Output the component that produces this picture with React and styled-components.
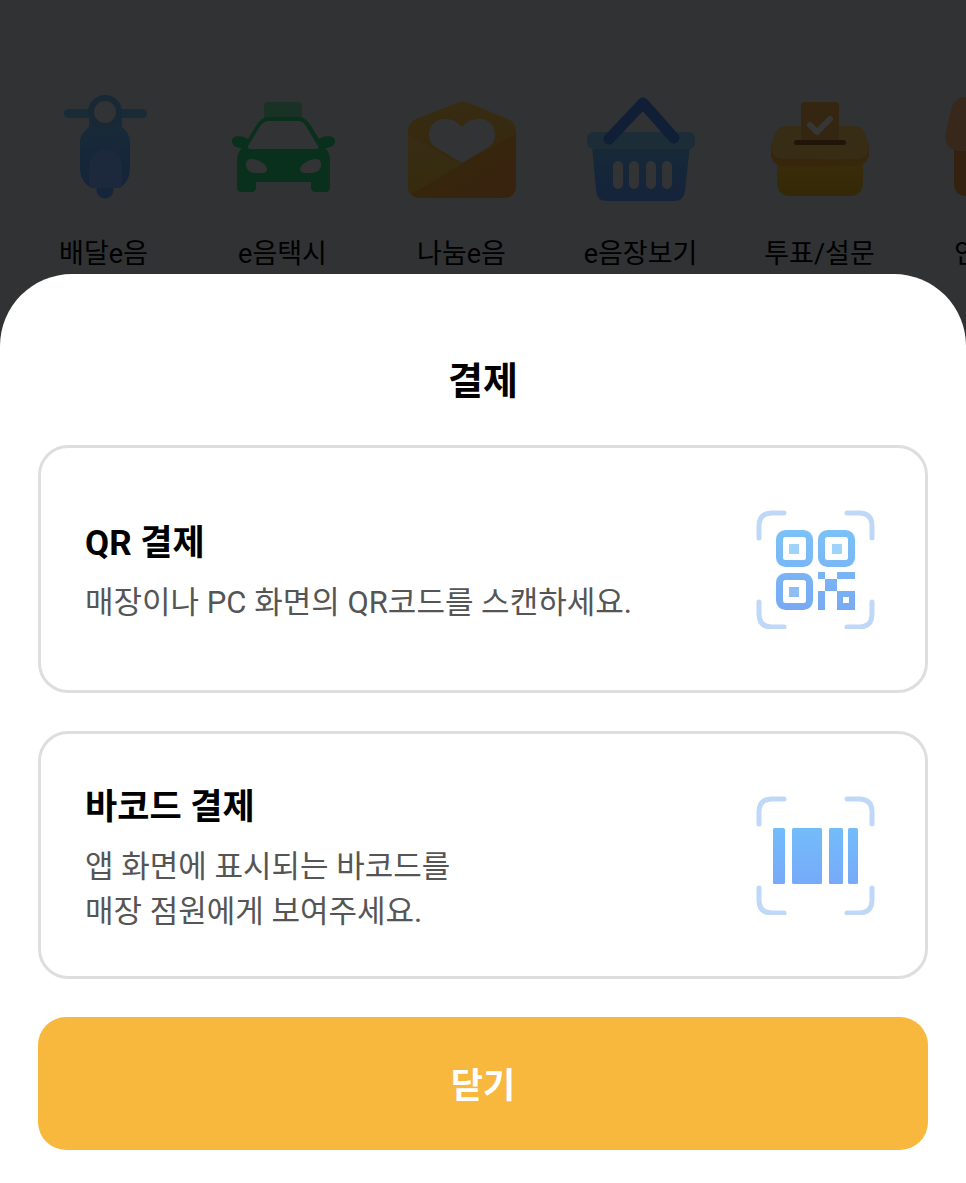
import React from "react";
import styled, { createGlobalStyle } from "styled-components";

const GlobalStyle = createGlobalStyle`
    *, *::before, *::after{
        box-sizing: border-box;
    }

    body{
        margin: 0;
        background-color: #303234;
        font-family: Roboto, "Noto Sans CJK KR", sans-serif;
        color: #000;
    }

    button{
        font-family: inherit;
        cursor: pointer;
    }
`;

const Page = styled.div`
    min-height: 100vh;
    display: flex;
    flex-direction: column;
    overflow: hidden;
`;

const Services = styled.nav`
    display: flex;
    padding: 85px 0 0 14px;
    overflow: hidden;
`;

const Service = styled.a`
    flex: 0 0 179px;
    display: flex;
    flex-direction: column;
    align-items: center;
    gap: 29px;
    font-size: 27px;
    line-height: 40px;
    white-space: nowrap;
    color: #000;
    text-decoration: none;
`;

const Icon = styled.svg`
    flex: none;
    display: block;
    width: 120px;
    height: 120px;
`;

const Sheet = styled.section`
    flex: 1;
    display: flex;
    flex-direction: column;
    gap: 38px;
    padding: 82px 38px 33px;
    background-color: #fff;
    border-radius: 72px 72px 0 0;
`;

const SheetTitle = styled.h1`
    margin: 0;
    font-size: 38px;
    line-height: 51px;
    font-weight: 700;
    text-align: center;
`;

const PayOption = styled.button`
    display: flex;
    align-items: center;
    justify-content: space-between;
    min-height: 248px;
    padding: 0 49px 0 44px;
    background-color: #fff;
    border: 3px solid #dedede;
    border-radius: 30px;
    color: #000;
    text-align: left;
`;

const OptionText = styled.span`
    display: flex;
    flex-direction: column;
    gap: 10px;
    padding-top: 5px;
`;

const OptionName = styled.strong`
    font-size: 35px;
    line-height: 52px;
    font-weight: 700;
`;

const OptionInfo = styled.span`
    font-size: 31px;
    line-height: 45px;
    color: #555;
    white-space: pre-line;
`;

const CloseButton = styled.button`
    min-height: 133px;
    padding: 6px 0 0;
    border: none;
    border-radius: 28px;
    background-color: #f8b83e;
    color: #fff;
    font-size: 35px;
    line-height: 52px;
    font-weight: 700;
`;

const Gradient = ({ id, from, to, x2 = 0 }) => (
    <linearGradient id={id} x1="0" y1="0" x2={x2} y2="1">
        <stop offset="0" stopColor={from}/>
        <stop offset="1" stopColor={to}/>
    </linearGradient>
);

const ScooterIcon = () => (
    <Icon viewBox="0 0 120 120" aria-hidden="true">
        <defs>
            <Gradient id="scooter" from="#192b38" to="#15243a"/>
        </defs>
        <rect x="20" y="24" width="83" height="9" rx="4.5" fill="#1a2b38"/>
        <circle cx="61" cy="105" r="8.5" fill="#14253c"/>
        <path d="M45 27h33v15c5 4 8 9 8 15v27c0 8-4 14-9 18H46c-6-4-10-10-10-18V57c0-6 4-11 9-15Z" fill="url(#scooter)"/>
        <circle cx="61" cy="27" r="17" fill="#182835"/>
        <circle cx="61" cy="27" r="11" fill="#323334"/>
        <path d="M45 81a16.500 16.500 0 0 1 33 0v18q0 4-4 4H49q-4 0-4-4Z" fill="#1c283c"/>
    </Icon>
);

const TaxiIcon = () => (
    <Icon viewBox="0 0 120 120" aria-hidden="true">
        <rect x="41" y="17" width="38" height="18" rx="4" fill="#1a3226"/>
        <path
            d="M47 32h27c7 0 10 3 14 9l8 13c4-3 16-5 16 2 0 5-5 7-10 7 4 4 5 8 5 14v25q0 5-5 5h-9q-5 0-5-5v-5H33v5q0 5-5 5h-9q-5 0-5-5V77c0-6 1-10 5-14-5 0-10-2-10-7 0-7 12-5 16-2l8-13c4-6 7-9 14-9Z"
            fill="#092f1d"
        />
        <path d="M46 36h29c4 0 6 2 8 5l12 20q1 3-2 3H27q-3 0-2-3l12-20c2-3 5-5 9-5Z" fill="#323334"/>
        <path d="M28 74c6 0 16 5 16 10 0 3-2 4-6 4h-6c-11 0-12-14-4-14ZM93 74c-6 0-16 5-16 10 0 3 2 4 6 4h6c11 0 12-14 4-14Z" fill="#323334"/>
    </Icon>
);

const EnvelopeIcon = () => (
    <Icon viewBox="0 0 120 120" aria-hidden="true">
        <defs>
            <Gradient id="envelope" from="#372b12" to="#35270b"/>
            <Gradient id="envelopeSide" from="#372d17" to="#362b0b"/>
            <Gradient id="envelopeFront" from="#35280b" to="#38220f" x2="1"/>
        </defs>
        <path d="M55 18q6-3 12 0l39 16q8 4 8 12v54q0 13-13 13H19q-13 0-13-13V46q0-8 8-12Z" fill="url(#envelope)"/>
        <path d="M6 50l54 30-50 29q-4-4-4-10Z" fill="url(#envelopeSide)"/>
        <path d="M114 49v51q0 13-13 13H19q-6 0-9-4l50-30Z" fill="url(#envelopeFront)"/>
        <path d="M60 42c10-13 33-11 33 8 0 5-2 9-6 12L60 78 33 62c-4-3-6-7-6-12 0-19 23-21 33-8Z" fill="#323334"/>
    </Icon>
);

const BasketIcon = () => (
    <Icon viewBox="0 0 120 120" aria-hidden="true">
        <defs>
            <Gradient id="basket" from="#172938" to="#15233b"/>
        </defs>
        <path d="M11 60h98l-5 46q-1 10-11 10H26q-10 0-11-10Z" fill="url(#basket)"/>
        <rect x="6" y="47" width="108" height="17" rx="6" fill="#1c2d38"/>
        <path d="M28 54L62 18l31 35" fill="none" stroke="#101f35" strokeWidth="11" strokeLinecap="round" strokeLinejoin="round"/>
        {[32, 48, 65, 81].map(x => (
            <rect key={x} x={x} y="76" width="10" height="28" rx="5" fill="#323334"/>
        ))}
    </Icon>
);

const BallotIcon = () => (
    <Icon viewBox="0 0 120 120" aria-hidden="true">
        <defs>
            <Gradient id="ballotBox" from="#3a2d0c" to="#332807"/>
            <Gradient id="ballotSide" from="#38230e" to="#36290a" x2="1"/>
        </defs>
        <path d="M17 70h86v27q0 14-14 14H31q-14 0-14-14Z" fill="url(#ballotBox)"/>
        <path d="M11 60h98v7q0 14-14 14H25q-14 0-14-14Z" fill="url(#ballotSide)"/>
        <path d="M26 41h68q8 0 11 8l4 12q0 13-13 13H24q-13 0-13-13l4-12q3-8 11-8Z" fill="#372c14"/>
        <rect x="34" y="55" width="52" height="5" rx="2.500" fill="#201508"/>
        <path d="M41 55V21q0-4 4-4h30q4 0 4 4v34Z" fill="#352611"/>
        <path d="M50 40l7 7 13-13" fill="none" stroke="#363636" strokeWidth="6" strokeLinecap="round" strokeLinejoin="round"/>
    </Icon>
);

const StoreIcon = () => (
    <Icon viewBox="0 0 120 120" aria-hidden="true">
        <path d="M15 55h90v43q0 13-13 13H28q-13 0-13-13Z" fill="#35210f"/>
        <path d="M27 12h66q10 0 13 13l8 25q0 16-16 16H22Q6 66 6 50l6-25q3-13 15-13Z" fill="#38281c"/>
    </Icon>
);

const ScanCorners = () => (
    <path
        d="M3 29V17Q3 4 16 4h12M91 4h12q13 0 13 13v12M116 93v12q0 13-13 13H91M28 118H16q-13 0-13-13V93"
        fill="none"
        stroke="#bfd8f7"
        strokeWidth="5"
        strokeLinecap="round"
    />
);

const QrIcon = () => (
    <Icon viewBox="0 0 120 120" aria-hidden="true">
        <defs>
            <linearGradient id="qr" gradientUnits="userSpaceOnUse" x1="0" y1="21" x2="0" y2="101">
                <stop offset="0" stopColor="#7cc1f8"/>
                <stop offset="1" stopColor="#78aaf3"/>
            </linearGradient>
        </defs>
        <ScanCorners/>
        <g fill="none" stroke="url(#qr)" strokeWidth="7">
            <rect x="23.500" y="24.500" width="30" height="30" rx="6"/>
            <rect x="65.500" y="24.500" width="30" height="30" rx="6"/>
            <rect x="23.500" y="67.500" width="30" height="30" rx="6"/>
        </g>
        <rect x="33" y="35" width="10" height="10" fill="#9ed3fa"/>
        <rect x="76" y="35" width="10" height="10" fill="#9ed3fa"/>
        <rect x="33" y="78" width="10" height="10" fill="#8fbef6"/>
        <path
            d="M62 63h7v7h-7ZM81 63h18v7H81ZM69 70h12v12H69ZM62 82h7v19h-7ZM81 82h18v19H81ZM87 88v6h6v-6Z"
            fill="url(#qr)"
            fillRule="evenodd"
        />
    </Icon>
);

const BarcodeIcon = () => (
    <Icon viewBox="0 0 120 120" aria-hidden="true">
        <defs>
            <linearGradient id="barcode" gradientUnits="userSpaceOnUse" x1="0" y1="33" x2="0" y2="89">
                <stop offset="0" stopColor="#73bcf9"/>
                <stop offset="1" stopColor="#77aafa"/>
            </linearGradient>
        </defs>
        <ScanCorners/>
        <g fill="url(#barcode)">
            <rect x="17" y="33" width="12" height="56" rx="1.500"/>
            <rect x="36" y="33" width="30" height="56" rx="1.500"/>
            <rect x="73" y="33" width="14" height="56" rx="1.500"/>
            <rect x="92" y="33" width="10" height="56" rx="1.500"/>
        </g>
    </Icon>
);

const services = [
    { name: "배달e음", icon: <ScooterIcon/> },
    { name: "e음택시", icon: <TaxiIcon/> },
    { name: "나눔e음", icon: <EnvelopeIcon/> },
    { name: "e음장보기", icon: <BasketIcon/> },
    { name: "투표/설문", icon: <BallotIcon/> },
    { name: "인천e음", icon: <StoreIcon/> }
];

const payOptions = [
    {
        name: "QR 결제",
        info: "매장이나 PC 화면의 QR코드를 스캔하세요.",
        icon: <QrIcon/>
    },
    {
        name: "바코드 결제",
        info: "앱 화면에 표시되는 바코드를\n매장 점원에게 보여주세요.",
        icon: <BarcodeIcon/>
    }
];

const App = () => (
    <Page>
        <GlobalStyle/>
        <Services>
            {services.map(item => (
                <Service href="#" key={item.name}>
                    {item.icon}
                    {item.name}
                </Service>
            ))}
        </Services>
        <Sheet role="dialog" aria-labelledby="sheet-title">
            <SheetTitle id="sheet-title">결제</SheetTitle>
            {payOptions.map(option => (
                <PayOption type="button" key={option.name}>
                    <OptionText>
                        <OptionName>{option.name}</OptionName>
                        <OptionInfo>{option.info}</OptionInfo>
                    </OptionText>
                    {option.icon}
                </PayOption>
            ))}
            <CloseButton type="button">닫기</CloseButton>
        </Sheet>
    </Page>
);

export default App;
